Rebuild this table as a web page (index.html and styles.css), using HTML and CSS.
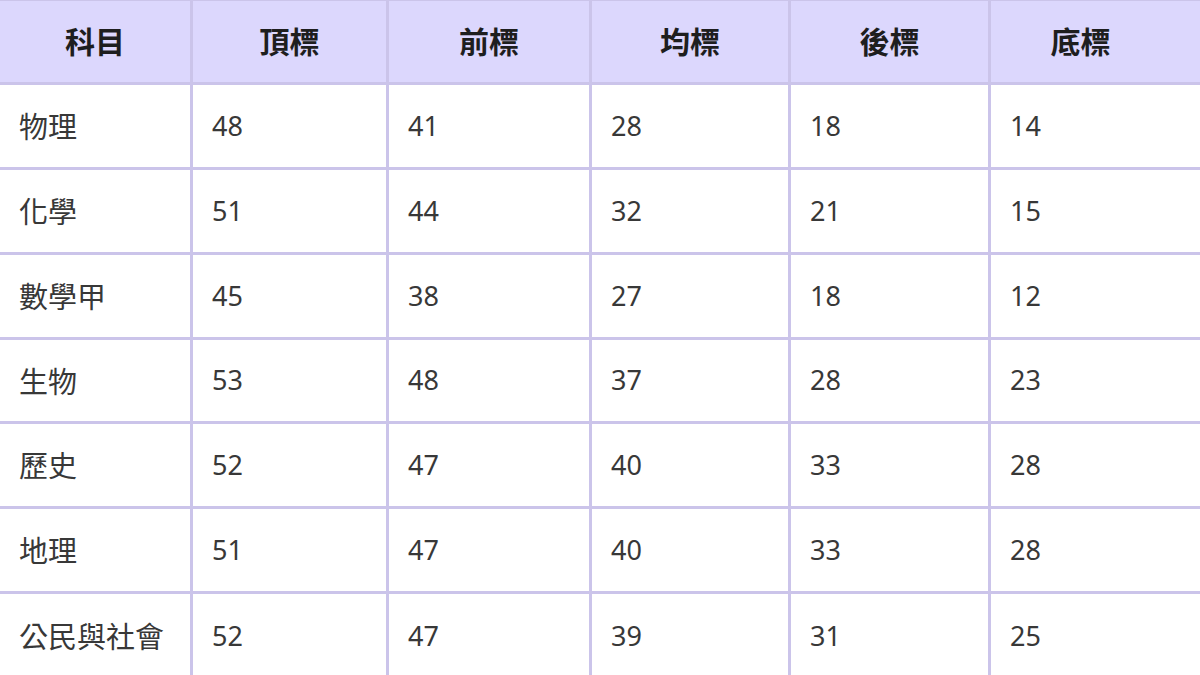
FILE: index.html
```html
<!DOCTYPE html>
<html lang="zh-Hant">
<head>
<meta charset="utf-8">
<title>分科測驗五標</title>
<link rel="stylesheet" href="styles.css">
</head>
<body>
<div class="table">
  <div class="cell head">科目</div><div class="cell head">頂標</div><div class="cell head">前標</div><div class="cell head">均標</div><div class="cell head">後標</div><div class="cell head last">底標</div>
  <div class="cell label">物理</div><div class="cell">48</div><div class="cell">41</div><div class="cell">28</div><div class="cell">18</div><div class="cell">14</div>
  <div class="cell label">化學</div><div class="cell">51</div><div class="cell">44</div><div class="cell">32</div><div class="cell">21</div><div class="cell">15</div>
  <div class="cell label">數學甲</div><div class="cell">45</div><div class="cell">38</div><div class="cell">27</div><div class="cell">18</div><div class="cell">12</div>
  <div class="cell label">生物</div><div class="cell">53</div><div class="cell">48</div><div class="cell">37</div><div class="cell">28</div><div class="cell">23</div>
  <div class="cell label">歷史</div><div class="cell">52</div><div class="cell">47</div><div class="cell">40</div><div class="cell">33</div><div class="cell">28</div>
  <div class="cell label">地理</div><div class="cell">51</div><div class="cell">47</div><div class="cell">40</div><div class="cell">33</div><div class="cell">28</div>
  <div class="cell label">公民與社會</div><div class="cell">52</div><div class="cell">47</div><div class="cell">39</div><div class="cell">31</div><div class="cell">25</div>
</div>
</body>
</html>
```
FILE: styles.css
```css
html, body {
  margin: 0;
  padding: 0;
  background: #ffffff;
  overflow: hidden;
}
body {
  width: 1200px;
  height: 675px;
  font-family: "Noto Sans", "Noto Sans CJK TC", sans-serif;
}
.table {
  display: grid;
  grid-template-columns: 190px 193px 200px 196px 197px 209px;
  grid-template-rows: 81px 82px 82px 82px 81px 82px 82px 84px;
  gap: 3px;
  padding-top: 1px;
  background: #cbc4ea;
  width: 1200px;
}
.cell {
  background: #ffffff;
  color: #383838;
  font-size: 27px;
  display: flex;
  align-items: center;
  padding-left: 19px;
  padding-bottom: 2px;
}
.cell.label {
  font-size: 29px;
}
.cell.head {
  background: #dcd7fd;
  color: #1e1e1e;
  font-weight: 700;
  justify-content: center;
  padding-left: 0;
  font-size: 30px;
  padding-bottom: 4px;
}
.cell.head.last {
  padding-right: 30px;
}
```
